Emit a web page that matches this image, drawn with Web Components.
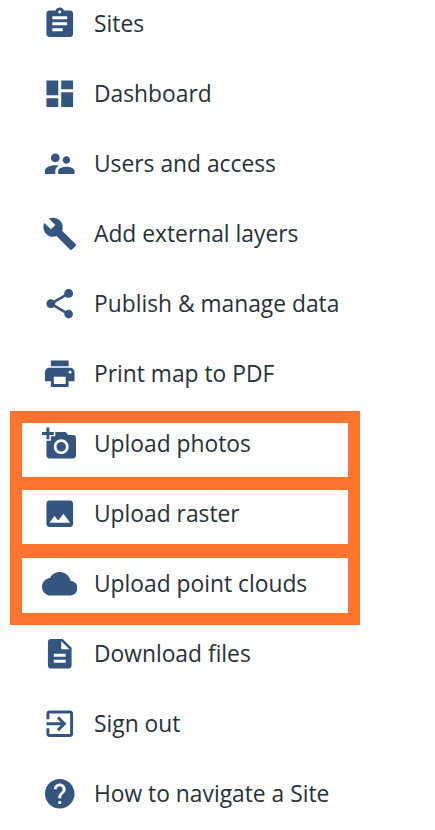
<!DOCTYPE html>
<html lang="en">
<head>
<meta charset="utf-8">
<title>Menu</title>
<style>
    html, body { margin: 0; background: #fff; }
    body { height: 830px; overflow: hidden; position: relative; font-family: "Open Sans", sans-serif; }
</style>
</head>
<body>
<side-menu>
    <menu-item icon="assignment">Sites</menu-item>
    <menu-item icon="dashboard">Dashboard</menu-item>
    <menu-item icon="supervisor">Users and access</menu-item>
    <menu-item icon="build">Add external layers</menu-item>
    <menu-item icon="share">Publish &amp; manage data</menu-item>
    <menu-item icon="print">Print map to PDF</menu-item>
    <menu-item icon="photo">Upload photos</menu-item>
    <menu-item icon="image">Upload raster</menu-item>
    <menu-item icon="cloud">Upload point clouds</menu-item>
    <menu-item icon="description">Download files</menu-item>
    <menu-item icon="exit">Sign out</menu-item>
    <menu-item icon="help">How to navigate a Site</menu-item>
</side-menu>
<highlight-frame></highlight-frame>

<script>
// material icon paths
const ICONS = {
    assignment: 'M19 3h-4.18C14.4 1.84 13.3 1 12 1c-1.3 0-2.4.84-2.82 2H5c-1.1 0-2 .9-2 2v14c0 1.1.9 2 2 2h14c1.1 0 2-.9 2-2V5c0-1.1-.9-2-2-2zm-7 0c.55 0 1 .45 1 1s-.45 1-1 1-1-.45-1-1 .45-1 1-1zm2 14H7v-2h7v2zm3-4H7v-2h10v2zm0-4H7V7h10v2z',
    dashboard: 'M3 13h8V3H3v10zm0 8h8v-6H3v6zm10 0h8V11h-8v10zm0-18v6h8V3h-8z',
    supervisor: 'M16.5 12c1.38 0 2.49-1.12 2.49-2.5S17.88 7 16.5 7C15.12 7 14 8.12 14 9.5s1.12 2.5 2.5 2.5zM9 11c1.66 0 2.99-1.34 2.99-3S10.66 5 9 5C7.34 5 6 6.34 6 8s1.34 3 3 3zm7.5 3c-1.83 0-5.5.92-5.5 2.75V19h11v-2.25c0-1.83-3.67-2.75-5.5-2.75zM9 13c-2.33 0-7 1.17-7 3.5V19h7v-2.25c0-.85.33-2.34 2.37-3.47C10.5 13.1 9.66 13 9 13z',
    build: 'M22.7 19l-9.1-9.1c.9-2.3.4-5-1.5-6.9-2-2-5-2.4-7.4-1.3L9 6 6 9 1.6 4.7C.4 7.1.9 10.1 2.9 12.1c1.9 1.9 4.6 2.4 6.9 1.5l9.1 9.1c.4.4 1 .4 1.4 0l2.3-2.3c.5-.4.5-1.1.1-1.4z',
    share: 'M18 16.08c-.76 0-1.44.3-1.96.77L8.91 12.7c.05-.23.09-.46.09-.7s-.04-.47-.09-.7l7.05-4.11c.54.5 1.25.81 2.04.81 1.66 0 3-1.34 3-3s-1.34-3-3-3-3 1.34-3 3c0 .24.04.47.09.7L8.04 9.81C7.5 9.31 6.79 9 6 9c-1.66 0-3 1.34-3 3s1.34 3 3 3c.79 0 1.5-.31 2.04-.81l7.12 4.16c-.05.21-.08.43-.08.65 0 1.61 1.31 2.92 2.92 2.92 1.61 0 2.92-1.31 2.92-2.92s-1.31-2.92-2.92-2.92z',
    print: 'M19 8H5c-1.66 0-3 1.34-3 3v6h4v4h12v-4h4v-6c0-1.66-1.34-3-3-3zm-3 11H8v-5h8v5zm3-7c-.55 0-1-.45-1-1s.45-1 1-1 1 .45 1 1-.45 1-1 1zm-1-9H6v4h12V3z',
    photo: 'M3 4V1h2v3h3v2H5v3H3V6H0V4h3zm3 6V7h3V4h7l1.83 2H21c1.1 0 2 .9 2 2v12c0 1.1-.9 2-2 2H5c-1.1 0-2-.9-2-2V10h3zm7 9c2.76 0 5-2.24 5-5s-2.24-5-5-5-5 2.24-5 5 2.24 5 5 5zm-3.2-5c0 1.77 1.43 3.2 3.2 3.2s3.2-1.43 3.2-3.2-1.43-3.2-3.2-3.2-3.2 1.43-3.2 3.2z',
    image: 'M21 19V5c0-1.1-.9-2-2-2H5c-1.1 0-2 .9-2 2v14c0 1.1.9 2 2 2h14c1.1 0 2-.9 2-2zM8.5 13.5l2.5 3.01L14.5 12l4.5 6H5l3.5-4.5z',
    cloud: 'M19.35 10.04C18.67 6.59 15.64 4 12 4 9.11 4 6.6 5.64 5.35 8.04 2.34 8.36 0 10.91 0 14c0 3.31 2.69 6 6 6h13c2.76 0 5-2.24 5-5 0-2.64-2.05-4.78-4.65-4.96z',
    description: 'M14 2H6c-1.1 0-1.99.9-1.99 2L4 20c0 1.1.89 2 1.99 2H18c1.1 0 2-.9 2-2V8l-6-6zm2 16H8v-2h8v2zm0-4H8v-2h8v2zm-3-5V3.5L18.5 9H13z',
    exit: 'M10.09 15.59L11.5 17l5-5-5-5-1.41 1.41L12.67 11H3v2h9.67l-2.58 2.59zM19 3H5c-1.11 0-2 .9-2 2v4h2V5h14v14H5v-4H3v4c0 1.1.89 2 2 2h14c1.1 0 2-.9 2-2V5c0-1.1-.9-2-2-2z',
    help: 'M12 2C6.48 2 2 6.48 2 12s4.48 10 10 10 10-4.48 10-10S17.52 2 12 2zm1 17h-2v-2h2v2zm2.07-7.75l-.9.92C13.45 12.9 13 13.5 13 15h-2v-.5c0-1.1.45-2.1 1.17-2.83l1.24-1.26c.37-.36.59-.86.59-1.41 0-1.1-.9-2-2-2s-2 .9-2 2H8c0-2.21 1.79-4 4-4s4 1.79 4 4c0 .88-.36 1.68-.93 2.25z'
};

// list container
class SideMenu extends HTMLElement {
    constructor() {
        super();
        this.attachShadow({ mode: 'open' });
        this.shadowRoot.innerHTML = `
            <style>
                :host { display: flex; flex-direction: column; margin-top: -11px; }
            </style>
            <slot></slot>`;
    }
}
customElements.define('side-menu', SideMenu);

// one row: icon + label
class MenuItem extends HTMLElement {
    constructor() {
        super();
        this.attachShadow({ mode: 'open' });
        const d = ICONS[this.getAttribute('icon')] || '';
        this.shadowRoot.innerHTML = `
            <style>
                :host {
                    display: flex;
                    align-items: center;
                    height: 70px;
                    padding-left: 41.75px;
                    gap: 16.75px;
                    font-size: 22.8px;
                    color: #263238;
                }
                svg { width: 35.5px; height: 35.5px; flex: none; fill: #34557f; }
                span { padding-bottom: 2px; }
            </style>
            <svg viewBox="0 0 24 24"><path d="${d}"></path></svg>
            <span><slot></slot></span>`;
    }
}
customElements.define('menu-item', MenuItem);

// orange annotation drawn over the upload rows
class HighlightFrame extends HTMLElement {
    constructor() {
        super();
        this.attachShadow({ mode: 'open' });
        this.shadowRoot.innerHTML = `
            <style>
                :host {
                    position: absolute;
                    left: 10px;
                    top: 411px;
                    width: 326px;
                    height: 190px;
                    border: 12px solid #ff7530;
                    pointer-events: none;
                }
                .bar { position: absolute; left: 0; right: 0; background: #ff7530; }
                .a { top: 54px; height: 13px; }
                .b { top: 121px; height: 14px; }
            </style>
            <div class="bar a"></div>
            <div class="bar b"></div>`;
    }
}
customElements.define('highlight-frame', HighlightFrame);
</script>
</body>
</html>
